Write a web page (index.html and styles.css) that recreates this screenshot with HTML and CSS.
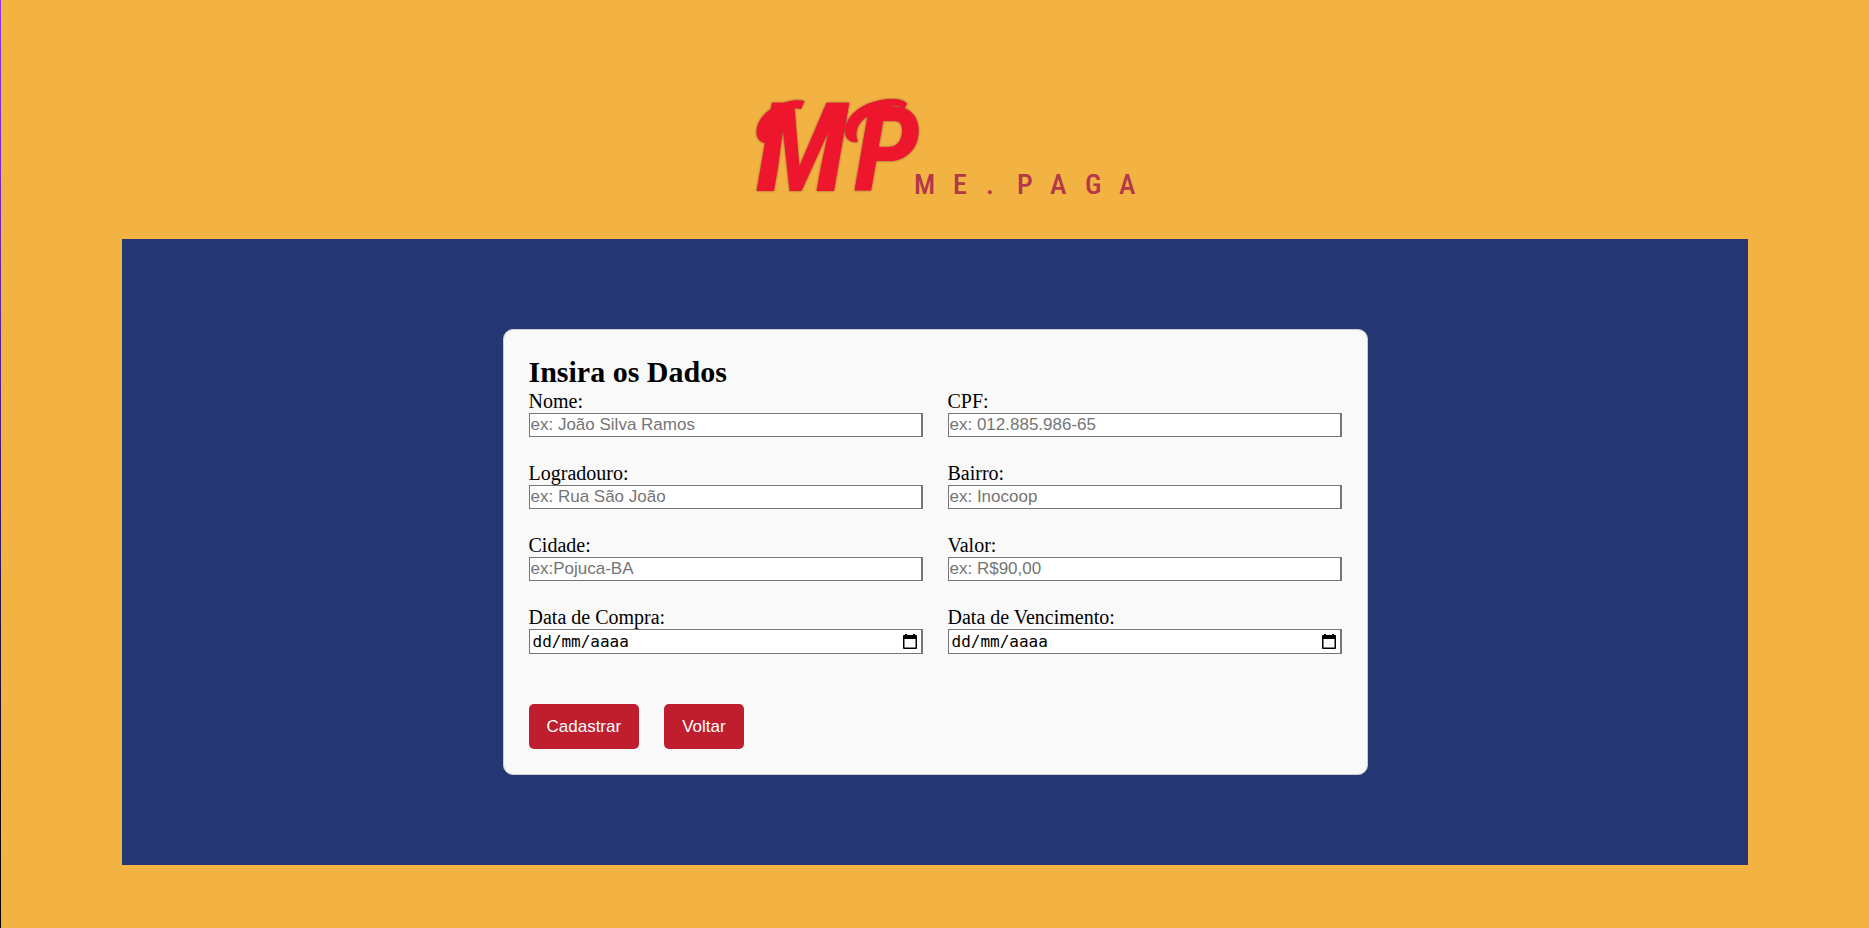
FILE: index.html
```html
<!DOCTYPE html>
<html lang="pt-BR">
<head>
<meta charset="utf-8">
<meta name="viewport" content="width=device-width, initial-scale=1">
<title>Me.Paga</title>
<link rel="stylesheet" href="styles.css">
</head>
<body>
<header class="header">
  <svg class="logo" viewBox="0 0 400 125" role="img" aria-label="MP Me.Paga">
    <g class="logo-mark">
      <text class="logo-m" x="21" y="106">M</text>
      <text class="logo-p" x="119" y="106">P</text>
      <path d="M69.500 16C52 12 22 26 21.500 47C21.500 55 27 59 34 58C30 42 37 27 53 22L66 24Z"/>
      <path d="M152 24C158 20 165 20 169 24L172 19C166 8 112 15 110 46C110 54 115 58 123 57C117 42 129 28 152 24Z"/>
    </g>
    <text class="logo-name" x="179 218 251 282 315 350 384" y="109">ME.PAGA</text>
  </svg>
</header>
<main class="panel">
  <form class="card">
    <h2 class="title">Insira os Dados</h2>
    <div class="fields">
      <div class="field"><label for="nome">Nome:</label><input class="input" id="nome" type="text" placeholder="ex: João Silva Ramos"></div>
      <div class="field"><label for="cpf">CPF:</label><input class="input" id="cpf" type="text" placeholder="ex: 012.885.986-65"></div>
      <div class="field"><label for="logradouro">Logradouro:</label><input class="input" id="logradouro" type="text" placeholder="ex: Rua São João"></div>
      <div class="field"><label for="bairro">Bairro:</label><input class="input" id="bairro" type="text" placeholder="ex: Inocoop"></div>
      <div class="field"><label for="cidade">Cidade:</label><input class="input" id="cidade" type="text" placeholder="ex:Pojuca-BA"></div>
      <div class="field"><label for="valor">Valor:</label><input class="input" id="valor" type="text" placeholder="ex: R$90,00"></div>
      <div class="field">
        <label for="compra">Data de Compra:</label>
        <div class="date">
          <input class="date-input" id="compra" type="text" inputmode="numeric" placeholder="dd/mm/aaaa">
          <button class="date-button" type="button" aria-label="Abrir calendário"><svg class="calendar" viewBox="0 0 14 15"><path fill-rule="evenodd" d="M2 0h2v1h6V0h2v1h1a1 1 0 0 1 1 1v12a1 1 0 0 1-1 1H1a1 1 0 0 1-1-1V2a1 1 0 0 1 1-1h1zM1.500 5v8.500h11V5z"/></svg></button>
        </div>
      </div>
      <div class="field">
        <label for="vencimento">Data de Vencimento:</label>
        <div class="date">
          <input class="date-input" id="vencimento" type="text" inputmode="numeric" placeholder="dd/mm/aaaa">
          <button class="date-button" type="button" aria-label="Abrir calendário"><svg class="calendar" viewBox="0 0 14 15"><path fill-rule="evenodd" d="M2 0h2v1h6V0h2v1h1a1 1 0 0 1 1 1v12a1 1 0 0 1-1 1H1a1 1 0 0 1-1-1V2a1 1 0 0 1 1-1h1zM1.500 5v8.500h11V5z"/></svg></button>
        </div>
      </div>
    </div>
    <div class="actions">
      <button class="button" type="submit">Cadastrar</button>
      <button class="button" type="button">Voltar</button>
    </div>
  </form>
</main>
</body>
</html>
```

FILE: styles.css
```css
* {
  box-sizing: border-box;
  margin: 0;
  padding: 0;
}

body {
  min-height: 100vh;
  border-left: 1px solid;
  border-image: linear-gradient(#9333ea, #581c9a 40%, #1e1240 70%, #000) 1;
  background: #f2b342;
  color: #000;
  font-family: "Liberation Serif", "Times New Roman", serif;
  font-size: 20px;
  line-height: 23px;
}

.header {
  display: flex;
  justify-content: center;
  padding: 85px 0 29px;
}

.logo {
  width: 400px;
  max-width: 100%;
  overflow: visible;
}

.logo-mark {
  fill: #ee162d;
  filter: drop-shadow(0 0 1px #8a4a3c);
  font-family: "Liberation Sans Narrow", "Arial Narrow", "Roboto Condensed", "Liberation Sans", sans-serif;
  font-style: italic;
  font-weight: bold;
}

.logo-m {
  font-size: 124px;
}

.logo-p {
  font-size: 118px;
}

.logo-name {
  fill: #b4374a;
  font: 500 28px "Roboto Condensed", "Liberation Sans Narrow", Roboto, sans-serif;
}

.panel {
  display: flex;
  justify-content: center;
  width: 87%;
  margin: 0 auto;
  padding: 90px 0;
  background: #253772;
}

.card {
  width: 100%;
  max-width: 865px;
  padding: 24px 25px 25px;
  border: 1px solid #ccc;
  border-radius: 10px;
  background: #f9f9f9;
}

.title {
  font-size: 30px;
  line-height: 36px;
}

.fields {
  display: grid;
  grid-template-columns: 1fr 1fr;
  gap: 25px;
}

.field {
  display: flex;
  flex-direction: column;
}

.input,
.date {
  width: 100%;
  height: 24px;
  border: 1px solid #767676;
  border-right-width: 2px;
  background: #fff;
}

.input {
  padding: 0 1px;
  font: 17px "Liberation Sans", Arial, sans-serif;
}

.input::placeholder {
  color: #757575;
}

.date {
  display: flex;
  align-items: center;
  height: 25px;
  padding: 0 4px 0 3px;
}

.date-input {
  flex: 1;
  min-width: 0;
  border: 0;
  background: none;
  font: 16px "DejaVu Sans Mono", monospace;
}

.date-input::placeholder {
  color: #000;
}

.date-button {
  display: flex;
  border: 0;
  background: none;
}

.calendar {
  width: 14px;
  height: 15px;
}

.actions {
  display: flex;
  gap: 25px;
  margin-top: 50px;
}

.button {
  height: 45px;
  padding: 0 18px;
  border: 0;
  border-radius: 5px;
  background: #be1e2d;
  color: #fff;
  font: 17px "Liberation Sans", Arial, sans-serif;
}
```
